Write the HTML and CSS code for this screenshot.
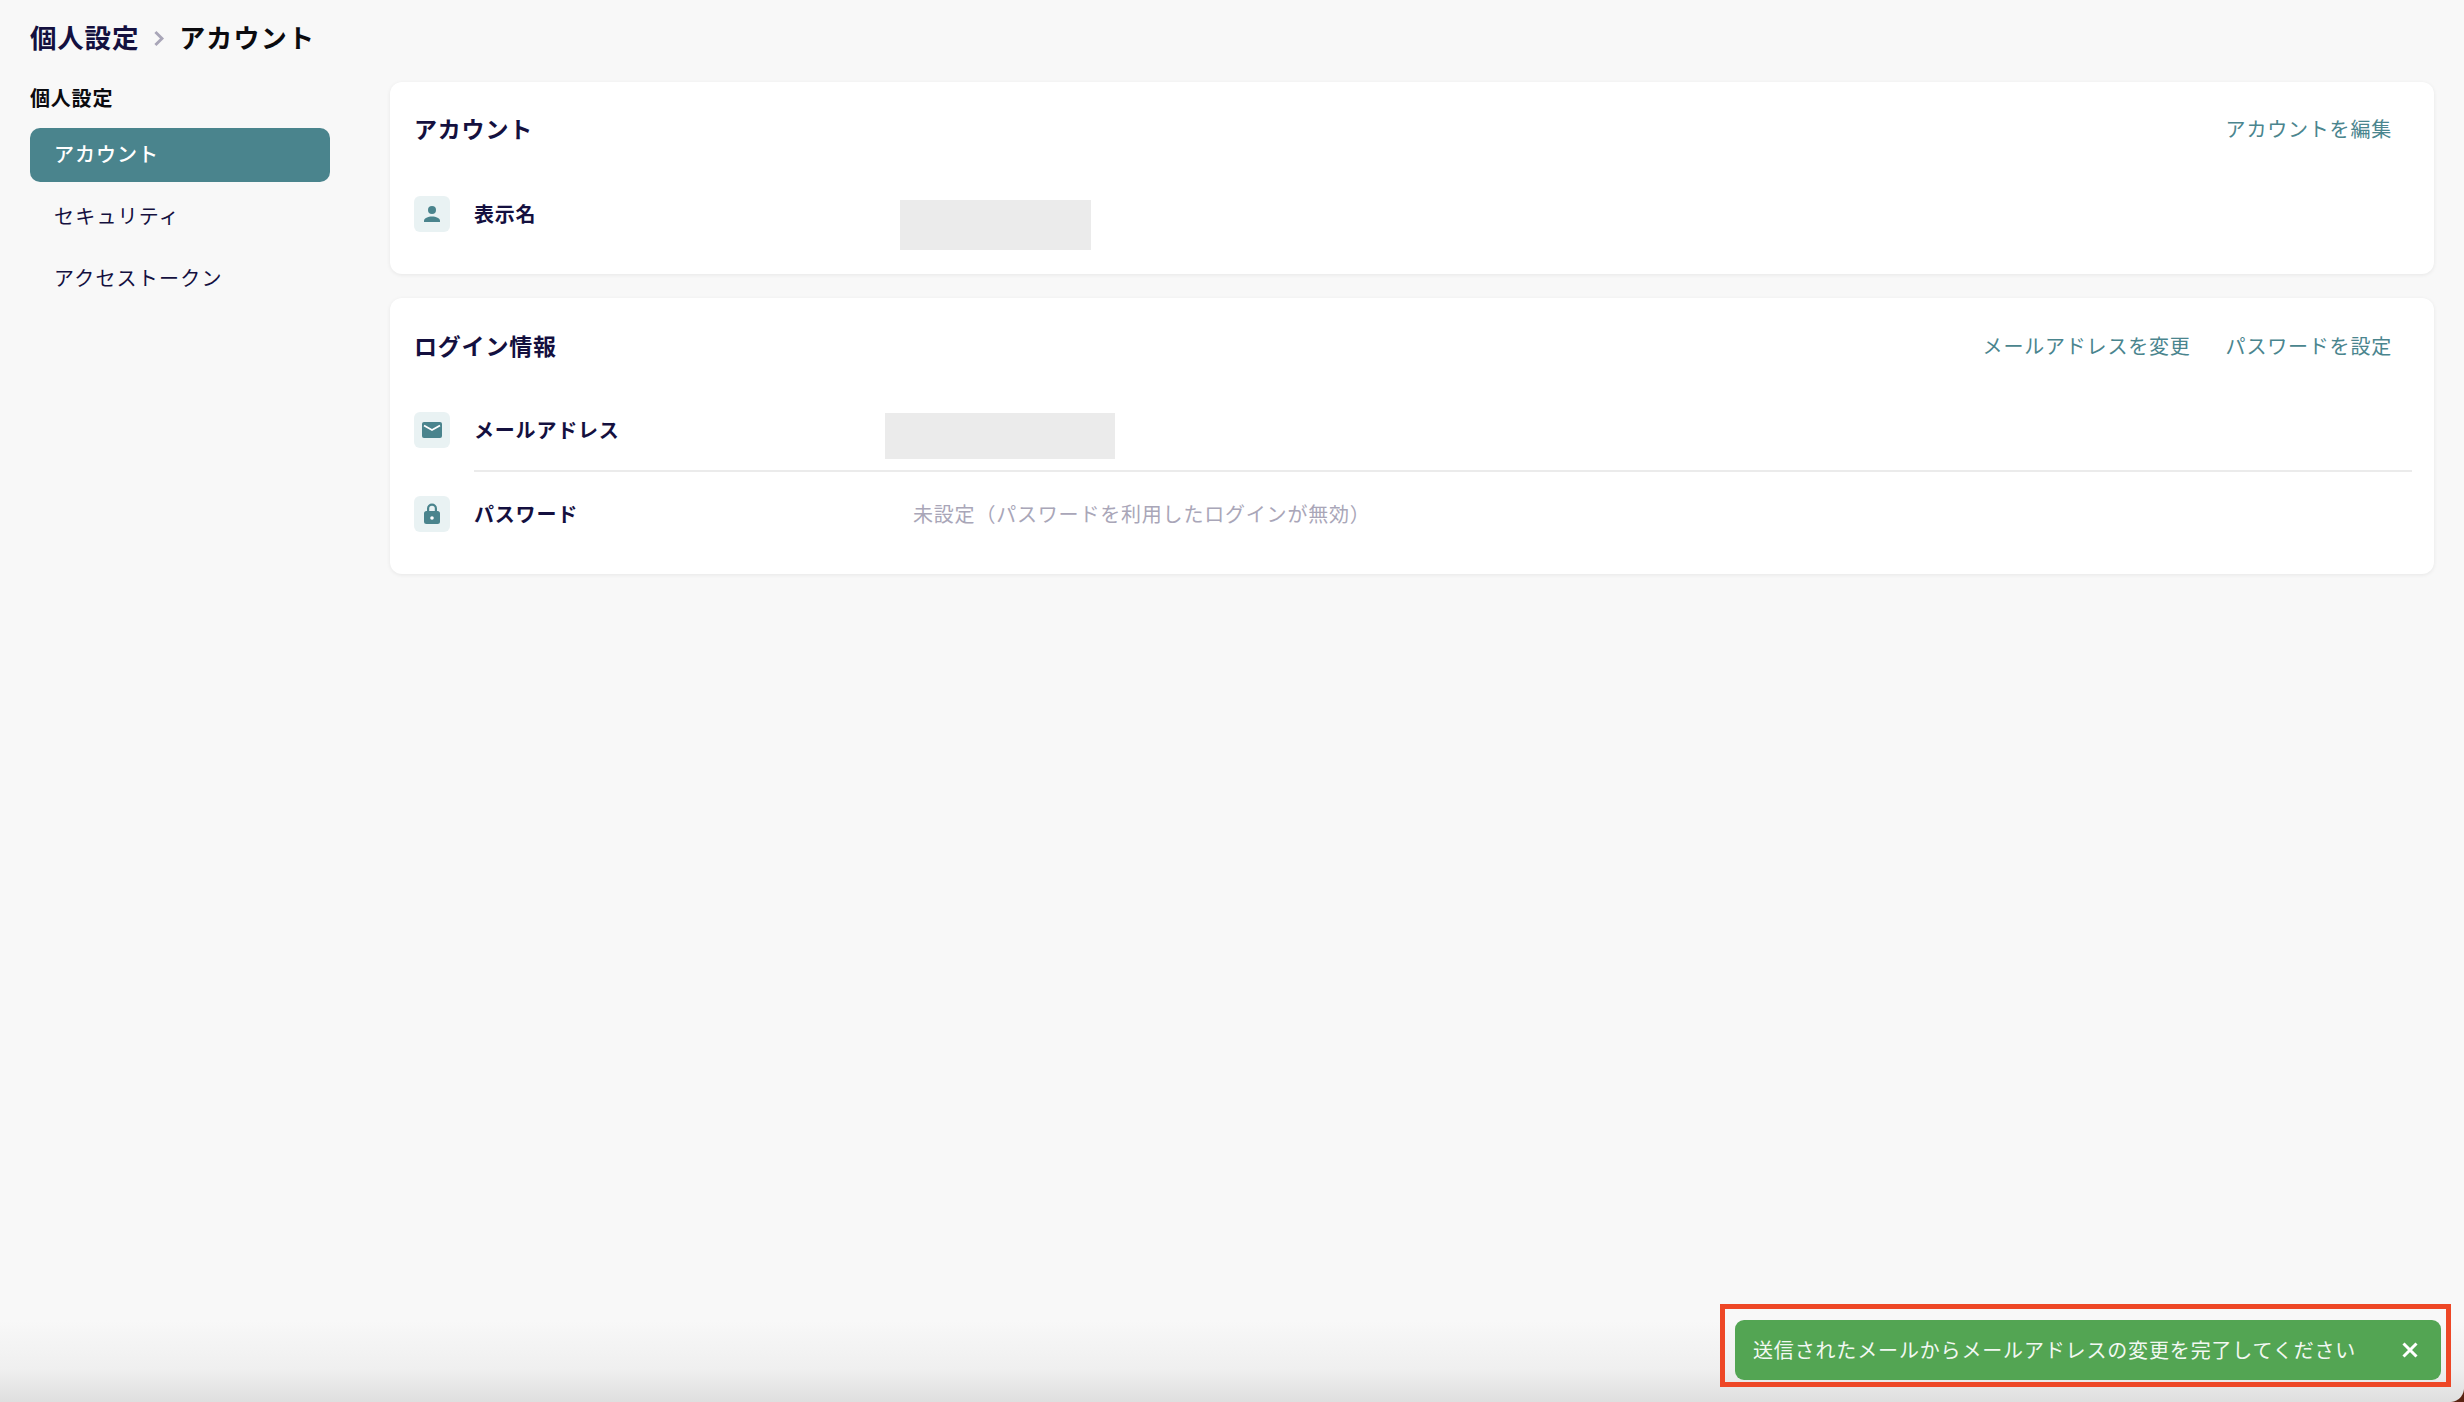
FILE: index.html
```html
<!DOCTYPE html>
<html lang="ja">
<head>
<meta charset="utf-8">
<title>アカウント</title>
<link rel="stylesheet" href="styles.css">
</head>
<body>
<div class="page">
  <header class="crumbs">
    <span class="crumb-parent">個人設定</span>
    <svg class="crumb-sep" viewBox="0 0 10 14"><path d="M2 1.500 7.500 7 2 12.500" fill="none" stroke="currentColor" stroke-width="2.400"/></svg>
    <span class="crumb-current">アカウント</span>
  </header>
  <div class="layout">
    <nav class="side">
      <div class="side-title">個人設定</div>
      <a class="side-item active">アカウント</a>
      <a class="side-item">セキュリティ</a>
      <a class="side-item">アクセストークン</a>
    </nav>
    <main class="main">
      <section class="card card-account">
        <div class="card-head">
          <h2>アカウント</h2>
          <div class="actions"><a>アカウントを編集</a></div>
        </div>
        <div class="row">
          <span class="ico"><svg viewBox="0 0 20 20"><circle cx="10" cy="6" r="4"/><path d="M2 18v-1.200C2 14.100 6 12.500 10 12.500s8 1.600 8 4.300V18z"/></svg></span>
          <div class="row-body">
            <span class="label">表示名</span>
            <span class="redact redact-name"></span>
          </div>
        </div>
      </section>
      <section class="card card-login">
        <div class="card-head">
          <h2>ログイン情報</h2>
          <div class="actions"><a>メールアドレスを変更</a><a>パスワードを設定</a></div>
        </div>
        <div class="row">
          <span class="ico"><svg viewBox="0 0 20 20"><path d="M2 2h16a2 2 0 0 1 2 2v12a2 2 0 0 1-2 2H2a2 2 0 0 1-2-2V4a2 2 0 0 1 2-2z"/><path class="mail-flap" d="M2 5.500 10 10l8-4.500"/></svg></span>
          <div class="row-body divided">
            <span class="label">メールアドレス</span>
            <span class="redact redact-mail"></span>
          </div>
        </div>
        <div class="row">
          <span class="ico"><svg viewBox="0 0 20 20"><path d="M5 8V5.600a5 5 0 0 1 10 0V8h.5A2.500 2.500 0 0 1 18 10.500v8A2.500 2.500 0 0 1 15.500 21h-11A2.500 2.500 0 0 1 2 18.500v-8A2.500 2.500 0 0 1 4.500 8zm2.200 0h5.600V5.600a2.800 2.800 0 0 0-5.600 0z" transform="translate(0 -1)"/><circle class="lock-hole" cx="10" cy="14" r="1.800"/></svg></span>
          <div class="row-body">
            <span class="label">パスワード</span>
            <span class="value muted">未設定（パスワードを利用したログインが無効）</span>
          </div>
        </div>
      </section>
    </main>
  </div>
</div>
<div class="annotation">
  <div class="toast">
    <span class="toast-text">送信されたメールからメールアドレスの変更を完了してください</span>
    <svg class="toast-close" viewBox="0 0 16 16"><path d="M1.500 1.500l13 13M14.500 1.500l-13 13" fill="none" stroke="currentColor" stroke-width="3"/></svg>
  </div>
</div>
<div class="corner"></div>
</body>
</html>
```
FILE: styles.css
```css
* { box-sizing: border-box; }
html, body { height: 100%; margin: 0; }
body {
  font-family: "Noto Sans CJK JP", "Noto Sans", sans-serif;
  font-size: 20px;
  letter-spacing: .04em;
  color: #14103f;
  background: linear-gradient(to bottom, #f8f8f8 0, #f8f8f8 1320px, #efefef 1370px, #dfdfdf 1402px);
  overflow: hidden;
}
.page { padding: 0 30px; }
.crumbs { height: 74px; display: flex; align-items: center; gap: 14px; font-size: 26.500px; font-weight: 700; line-height: 1; }
.crumb-parent { color: #14103f; }
.crumb-current { color: #0b0b0f; font-size: 26px; letter-spacing: .045em; }
.crumb-sep { width: 12px; height: 17px; color: #a9a6b8; margin: 2px 0 0 0; }
.layout { display: flex; align-items: flex-start; gap: 60px; margin-top: 8px; }
.side { width: 300px; flex: none; display: flex; flex-direction: column; gap: 8px; }
.side-title { height: 38px; font-weight: 700; color: #0b0b0f; line-height: 32px; }
.side-item { height: 54px; padding: 0 0 3px 24px; display: flex; align-items: center; border-radius: 10px; color: #14103f; letter-spacing: .06em; }
.side-item.active { background: #4a848d; color: #fff; font-weight: 500; letter-spacing: .05em; }
.main { flex: 1; min-width: 0; display: flex; flex-direction: column; gap: 24px; }
.card { background: #fff; border-radius: 12px; box-shadow: 0 1px 4px rgba(0, 0, 0, .07); padding: 0 24px; }
.card-account { height: 192px; }
.card-login { height: 276px; }
.card-head { height: 114px; display: flex; align-items: center; justify-content: space-between; padding: 0 18px 20px 0; }
.card-login .card-head { padding-bottom: 18px; }
.card-head h2 { margin: -2px 0 0; font-size: 23px; font-weight: 700; line-height: 1; color: #14103f; }
.actions { display: flex; gap: 35px; font-size: 20px; line-height: 1; color: #4a858e; }
.row { position: relative; display: flex; gap: 24px; align-items: flex-start; }
.ico { width: 36px; height: 36px; flex: none; background: #e9f2f3; border-radius: 6px; display: flex; align-items: center; justify-content: center; }
.ico svg { width: 20px; height: 20px; fill: #4a848d; overflow: visible; }
.mail-flap { fill: none; stroke: #fff; stroke-width: 1.800; }
.lock-hole { fill: #fff; }
.row-body { flex: 1; display: flex; align-items: center; height: 36px; margin-bottom: 48px; }
.row-body.divided::after { content: ""; position: absolute; left: 60px; right: -2px; top: 58px; height: 2px; background: #ebebeb; }
.label { width: 439px; flex: none; font-weight: 700; color: #14103f; line-height: 1; }
.value { line-height: 1; }
.muted { color: #a9a6b8; }
.redact { position: absolute; background: #ebebeb; }
.redact-name { left: 486px; top: 4px; width: 191px; height: 50px; }
.redact-mail { left: 471px; top: 1px; width: 230px; height: 46px; }
.annotation { position: fixed; left: 1720px; top: 1304px; width: 731px; height: 83px; border: 5px solid #ee4726; padding: 11px 5px 2px 10px; }
.toast { height: 60px; background: #53a553; border-radius: 9px; display: flex; align-items: center; justify-content: space-between; padding: 0 23px 0 18px; color: #f2f8f2; }
.toast-text { position: relative; top: -1px; letter-spacing: .042em; }
.toast-close { width: 16px; height: 16px; color: #fff; }
.corner { position: fixed; right: 0; bottom: 0; width: 14px; height: 14px; background: radial-gradient(circle at top left, transparent 13.500px, #5a2312 14.500px); }
```
